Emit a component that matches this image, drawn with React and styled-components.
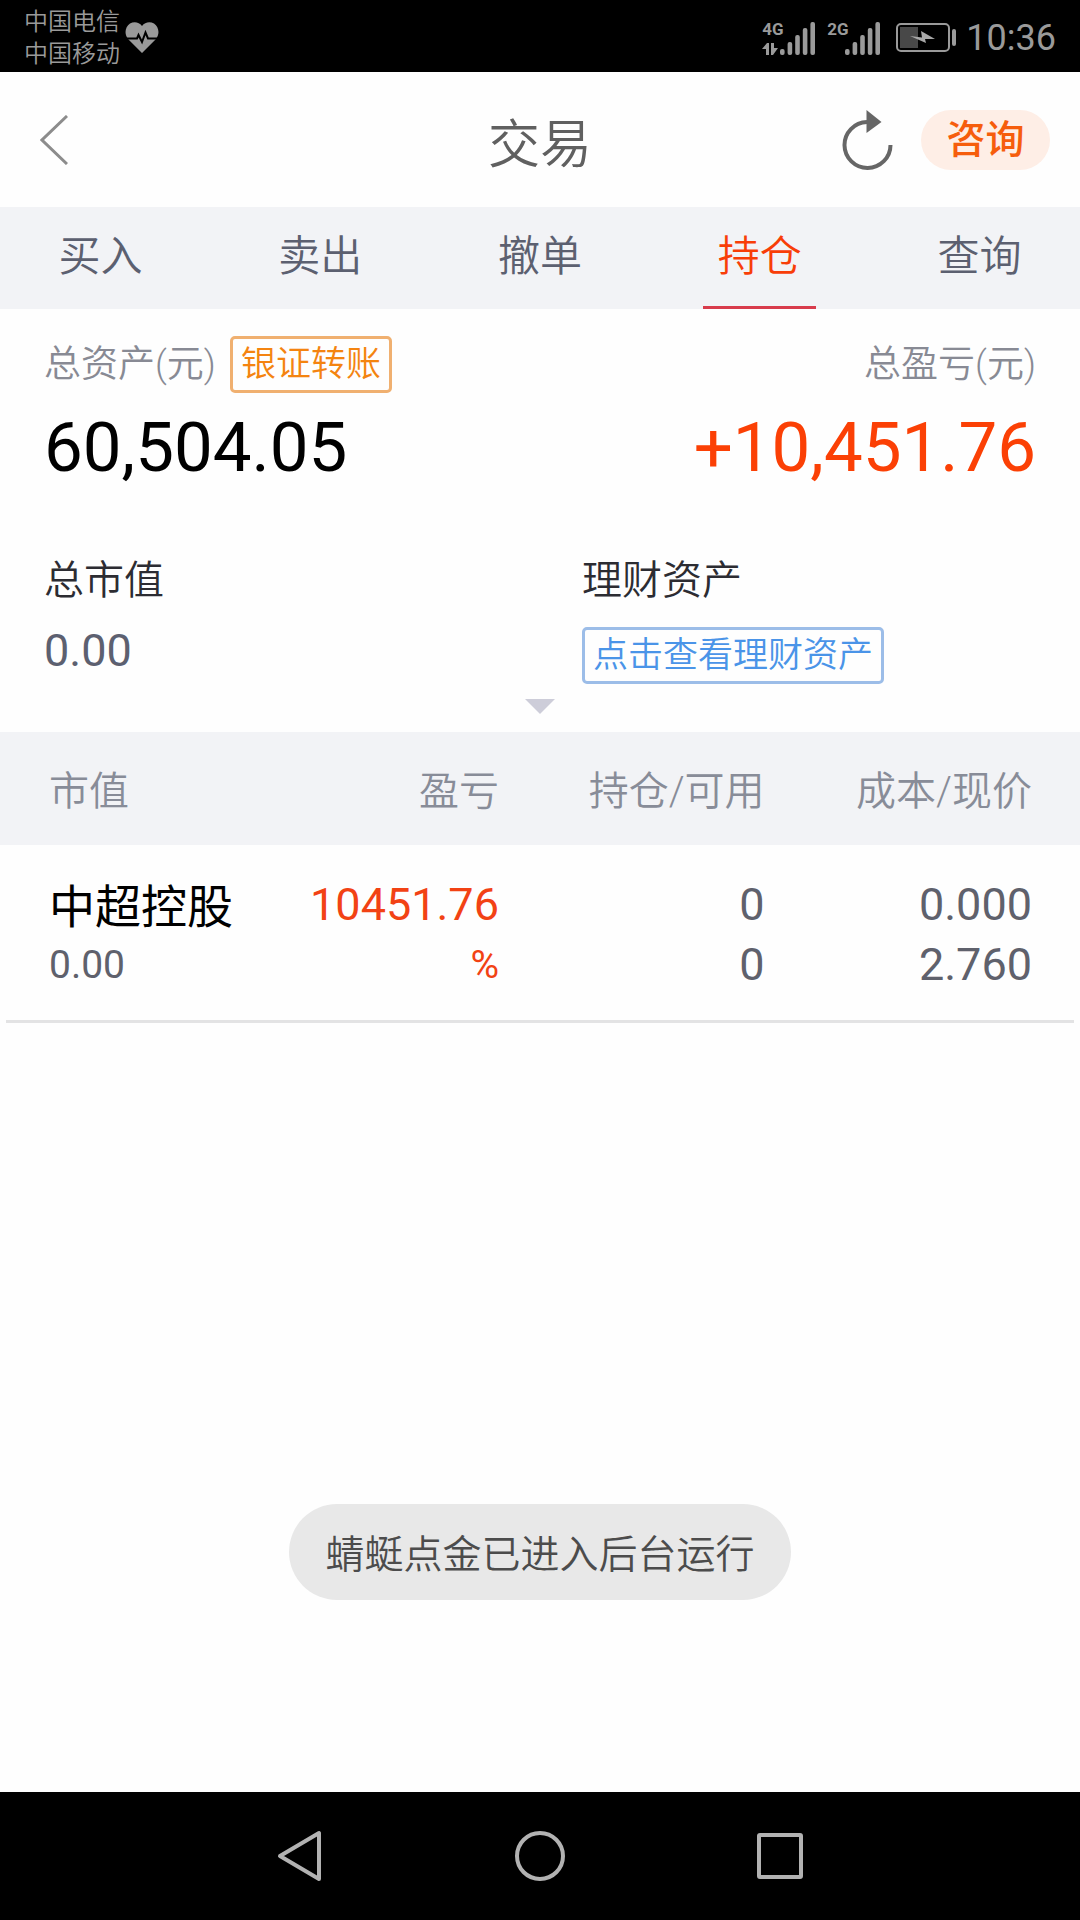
import React from "react";
import styled, { createGlobalStyle } from "styled-components";

const GlobalStyle = createGlobalStyle`
    * {
        box-sizing: border-box;
    }

    body {
        margin: 0;
        background: #fefefe;
        font-family: Roboto, "Noto Sans CJK SC", sans-serif;
        font-weight: 400;
        color: #5c6070;
    }

    button {
        padding: 0;
        border: none;
        background: none;
        font: inherit;
        color: inherit;
        cursor: pointer;
    }

    svg {
        display: block;
    }
`;

const Screen = styled.div`
    position: relative;
    min-height: 100vh;
    display: flex;
    flex-direction: column;
`;

const StatusBar = styled.div`
    height: 72px;
    padding: 3px 24px 0;
    display: flex;
    align-items: center;
    justify-content: space-between;
    background: #000;
    color: #9a9a9a;
`;

const StatusGroup = styled.div`
    display: flex;
    align-items: center;
    gap: ${(props) => props.$gap}px;
`;

const Carriers = styled.div`
    font-size: 24px;
    line-height: 32px;
    font-weight: 350;
`;

const Signal = styled.div`
    display: flex;
    height: 34px;
`;

const SignalType = styled.div`
    width: 18px;
    display: flex;
    flex-direction: column;
    justify-content: space-between;
    font-size: 17px;
    line-height: 16px;
    font-weight: 700;
`;

const Clock = styled.time`
    font-size: 36px;
    line-height: 40px;
`;

const Header = styled.header`
    height: 135px;
    padding: 0 30px;
    display: grid;
    grid-template-columns: 1fr auto 1fr;
    align-items: center;
`;

const BackButton = styled.button`
    justify-self: start;
    padding: 0 10px;
`;

const Title = styled.h1`
    margin: 0;
    padding-top: 12px;
    font-size: 52px;
    line-height: 60px;
    font-weight: 350;
    color: #606060;
`;

const HeaderActions = styled.div`
    justify-self: end;
    display: flex;
    align-items: center;
    gap: 28px;
`;

const ConsultButton = styled.button`
    width: 129px;
    height: 60px;
    border-radius: 30px;
    background: #feeee6;
    font-size: 39px;
    line-height: 60px;
    font-weight: 500;
    color: #f65d0c;
`;

const Tabs = styled.nav`
    height: 102px;
    padding: 0 44px;
    display: flex;
    justify-content: space-between;
    background: #f2f3f6;
`;

const Tab = styled.button`
    width: 113px;
    border-bottom: 3px solid ${(props) => (props.$active ? "#d83c4c" : "transparent")};
    font-size: 42px;
    line-height: 48px;
    font-weight: 350;
    color: ${(props) => (props.$active ? "#f83e08" : "#5c6070")};
`;

const Summary = styled.section`
    padding: 27px 44px 18px;
`;

const Totals = styled.div`
    display: flex;
    justify-content: space-between;
    margin-bottom: 69px;
`;

const Total = styled.div`
    text-align: ${(props) => (props.$right ? "right" : "left")};
`;

const TotalLabel = styled.div`
    height: 57px;
    display: flex;
    align-items: center;
    justify-content: ${(props) => (props.$right ? "flex-end" : "flex-start")};
    gap: 14px;
    font-size: 37px;
    line-height: 54px;
    font-weight: 350;
    color: #888a94;
`;

const TotalValue = styled.div`
    margin-top: 15px;
    font-size: 69px;
    line-height: 80px;
    color: ${(props) => (props.$up ? "#fb4005" : "#000")};
`;

const OutlineButton = styled.button`
    height: 57px;
    padding: 0 8px;
    border: 3px solid ${(props) => (props.$blue ? "#9cbde8" : "#f0b070")};
    border-radius: 5px;
    font-size: 35px;
    line-height: 48px;
    font-weight: 350;
    color: ${(props) => (props.$blue ? "#4a94e8" : "#f48410")};
`;

const Details = styled.div`
    display: grid;
    grid-template-columns: 1fr 1fr;
    column-gap: 84px;
`;

const DetailLabel = styled.div`
    font-size: 40px;
    line-height: 48px;
    font-weight: 350;
    color: #2c2c32;
`;

const DetailValue = styled.div`
    display: flex;
    align-items: flex-start;
    margin-top: 22px;
    font-size: 45px;
    line-height: 48px;
`;

const ExpandButton = styled.button`
    display: block;
    margin: 15px auto 0;
`;

const Holdings = styled.table`
    width: 100%;
    table-layout: fixed;
    border-collapse: collapse;
`;

const HeadCell = styled.th`
    width: ${(props) => props.$width};
    height: 113px;
    padding: 6px 0 0;
    background: #f2f3f6;
    font-size: 40px;
    line-height: 48px;
    font-weight: 350;
    text-align: right;
    color: #888c98;

    &:first-child {
        padding-left: 49px;
        text-align: left;
    }

    &:last-child {
        padding-right: 48px;
    }
`;

const Cell = styled.td`
    padding: 30px 0 25px;
    text-align: right;
    color: ${(props) => (props.$up ? "#f24214" : "#5f616c")};

    &:first-child {
        padding-left: 49px;
        text-align: left;
    }

    &:last-child {
        padding-right: 48px;
    }
`;

const CellLine = styled.div`
    height: 60px;
    font-size: ${(props) => (props.$small ? 39 : 45)}px;
    line-height: 60px;
`;

const StockName = styled.div`
    height: 60px;
    font-size: 46px;
    line-height: 64px;
    color: #000;
`;

const Divider = styled.hr`
    width: auto;
    height: 3px;
    margin: 0 6px;
    border: none;
    background: #e3e3e4;
`;

const Toast = styled.div`
    position: absolute;
    right: 0;
    bottom: 320px;
    left: 0;
    width: fit-content;
    margin: 0 auto;
    padding: 6px 36px 0;
    border-radius: 48px;
    background: #e8e8e8;
    font-size: 39px;
    line-height: 90px;
    font-weight: 350;
    color: #4c4c4c;
`;

const SystemNav = styled.nav`
    height: 128px;
    margin-top: auto;
    display: flex;
    align-items: center;
    justify-content: center;
    background: #000;
`;

const SystemButton = styled.button`
    width: 240px;
    height: 128px;
    display: flex;
    align-items: center;
    justify-content: center;
`;

const tabs = ["买入", "卖出", "撤单", "持仓", "查询"];

const columns = [
    { name: "市值", width: "24.2%" },
    { name: "盈亏", width: "22%" },
    { name: "持仓/可用", width: "24.6%" },
    { name: "成本/现价", width: "29.2%" },
];

const stocks = [
    {
        name: "中超控股",
        value: "0.00",
        profit: "10451.76",
        percent: "%",
        amount: "0",
        available: "0",
        cost: "0.000",
        price: "2.760",
    },
];

const HeartIcon = () => (
    <svg width="34" height="32" viewBox="0 0 34 32">
        <path
            d="M17 31 L3 17 C-1 12 0 5 5 1.500 C9 -0.500 14 0 17 4 C20 0 25 -0.500 29 1.500 C34 5 35 12 31 17 Z"
            fill="#9a9a9a"
        />
        <path
            d="M0 16.500 H12 L13.500 13 L17 20 L20.500 10.500 L23 16.500 H34"
            fill="none"
            stroke="#000"
            strokeWidth="2"
        />
    </svg>
);

const DataArrows = () => (
    <svg width="16" height="12" viewBox="0 0 16 12" fill="#9a9a9a">
        <path d="M0 6 L5 0 H7 V12 H4 V6 Z" />
        <path d="M9 0 H12 V5 H16 L11 12 H9 Z" />
    </svg>
);

const SignalBars = () => (
    <svg width="35" height="34" viewBox="0 0 35 34" fill="#9a9a9a">
        {[6, 13, 20, 27, 33].map((h, i) => (
            <rect
                key={h}
                x={i * 7.6}
                y={34 - h}
                width="4.6"
                height={h}
                rx="2"
            />
        ))}
    </svg>
);

const BatteryIcon = () => (
    <svg width="61" height="30" viewBox="0 0 61 30">
        <rect
            x="1"
            y="1"
            width="52"
            height="27"
            rx="4"
            fill="none"
            stroke="#9a9a9a"
            strokeWidth="2"
        />
        <rect x="4" y="4" width="18" height="21" fill="#484848" />
        <path
            d="M14 13 L26 14.500 L25 8 L39 16 L29 16 L30 20 Z"
            fill="#a8a8a8"
        />
        <rect x="56" y="6" width="4" height="17" rx="2" fill="#9a9a9a" />
    </svg>
);

const BackIcon = () => (
    <svg width="28" height="50" viewBox="0 0 28 50">
        <path
            d="M27 1 L2 25 L27 49"
            fill="none"
            stroke="#8c8c8c"
            strokeWidth="3"
        />
    </svg>
);

const RefreshIcon = () => (
    <svg width="51" height="60" viewBox="0 0 51 60">
        <path
            d="M25 12 A23 23 0 1 0 48.500 35"
            fill="none"
            stroke="#666"
            strokeWidth="4"
        />
        <path d="M24.500 0 L39.500 12 L24.500 23 Z" fill="#666" />
    </svg>
);

const SystemIcon = ({ children }) => (
    <svg
        width="52"
        height="52"
        viewBox="0 0 52 52"
        fill="none"
        stroke="#b2b2b2"
        strokeWidth="4"
        strokeLinejoin="round"
    >
        {children}
    </svg>
);

export default function App() {
    return (
        <Screen>
            <GlobalStyle />
            <StatusBar>
                <StatusGroup $gap={5}>
                    <Carriers>
                        <div>中国电信</div>
                        <div>中国移动</div>
                    </Carriers>
                    <HeartIcon />
                </StatusGroup>
                <StatusGroup $gap={9}>
                    <StatusGroup $gap={16}>
                        <StatusGroup $gap={12}>
                            <Signal>
                                <SignalType>
                                    4G
                                    <DataArrows />
                                </SignalType>
                                <SignalBars />
                            </Signal>
                            <Signal>
                                <SignalType>2G</SignalType>
                                <SignalBars />
                            </Signal>
                        </StatusGroup>
                        <BatteryIcon />
                    </StatusGroup>
                    <Clock>10:36</Clock>
                </StatusGroup>
            </StatusBar>

            <Header>
                <BackButton aria-label="返回">
                    <BackIcon />
                </BackButton>
                <Title>交易</Title>
                <HeaderActions>
                    <button aria-label="刷新">
                        <RefreshIcon />
                    </button>
                    <ConsultButton>咨询</ConsultButton>
                </HeaderActions>
            </Header>

            <Tabs>
                {tabs.map((tab) => (
                    <Tab key={tab} $active={tab === "持仓"}>
                        {tab}
                    </Tab>
                ))}
            </Tabs>

            <Summary>
                <Totals>
                    <Total>
                        <TotalLabel>
                            总资产(元)
                            <OutlineButton>银证转账</OutlineButton>
                        </TotalLabel>
                        <TotalValue>60,504.05</TotalValue>
                    </Total>
                    <Total $right>
                        <TotalLabel $right>总盈亏(元)</TotalLabel>
                        <TotalValue $up>+10,451.76</TotalValue>
                    </Total>
                </Totals>
                <Details>
                    <div>
                        <DetailLabel>总市值</DetailLabel>
                        <DetailValue>0.00</DetailValue>
                    </div>
                    <div>
                        <DetailLabel>理财资产</DetailLabel>
                        <DetailValue>
                            <OutlineButton $blue>点击查看理财资产</OutlineButton>
                        </DetailValue>
                    </div>
                </Details>
                <ExpandButton aria-label="展开">
                    <svg width="30" height="15" viewBox="0 0 30 15">
                        <path d="M0 0 H30 L15 15 Z" fill="#cdcdd9" />
                    </svg>
                </ExpandButton>
            </Summary>

            <Holdings>
                <thead>
                    <tr>
                        {columns.map((column) => (
                            <HeadCell key={column.name} $width={column.width}>
                                {column.name}
                            </HeadCell>
                        ))}
                    </tr>
                </thead>
                <tbody>
                    {stocks.map((stock) => (
                        <tr key={stock.name}>
                            <Cell>
                                <StockName>{stock.name}</StockName>
                                <CellLine $small>{stock.value}</CellLine>
                            </Cell>
                            <Cell $up>
                                <CellLine>{stock.profit}</CellLine>
                                <CellLine $small>{stock.percent}</CellLine>
                            </Cell>
                            <Cell>
                                <CellLine>{stock.amount}</CellLine>
                                <CellLine>{stock.available}</CellLine>
                            </Cell>
                            <Cell>
                                <CellLine>{stock.cost}</CellLine>
                                <CellLine>{stock.price}</CellLine>
                            </Cell>
                        </tr>
                    ))}
                </tbody>
            </Holdings>
            <Divider />

            <Toast role="status">蜻蜓点金已进入后台运行</Toast>

            <SystemNav>
                <SystemButton aria-label="后退">
                    <SystemIcon>
                        <path d="M45 3 V49 L6 26 Z" />
                    </SystemIcon>
                </SystemButton>
                <SystemButton aria-label="主屏幕">
                    <SystemIcon>
                        <circle cx="26" cy="26" r="23" />
                    </SystemIcon>
                </SystemButton>
                <SystemButton aria-label="最近任务">
                    <SystemIcon>
                        <rect x="5" y="5" width="42" height="42" rx="1" />
                    </SystemIcon>
                </SystemButton>
            </SystemNav>
        </Screen>
    );
}
